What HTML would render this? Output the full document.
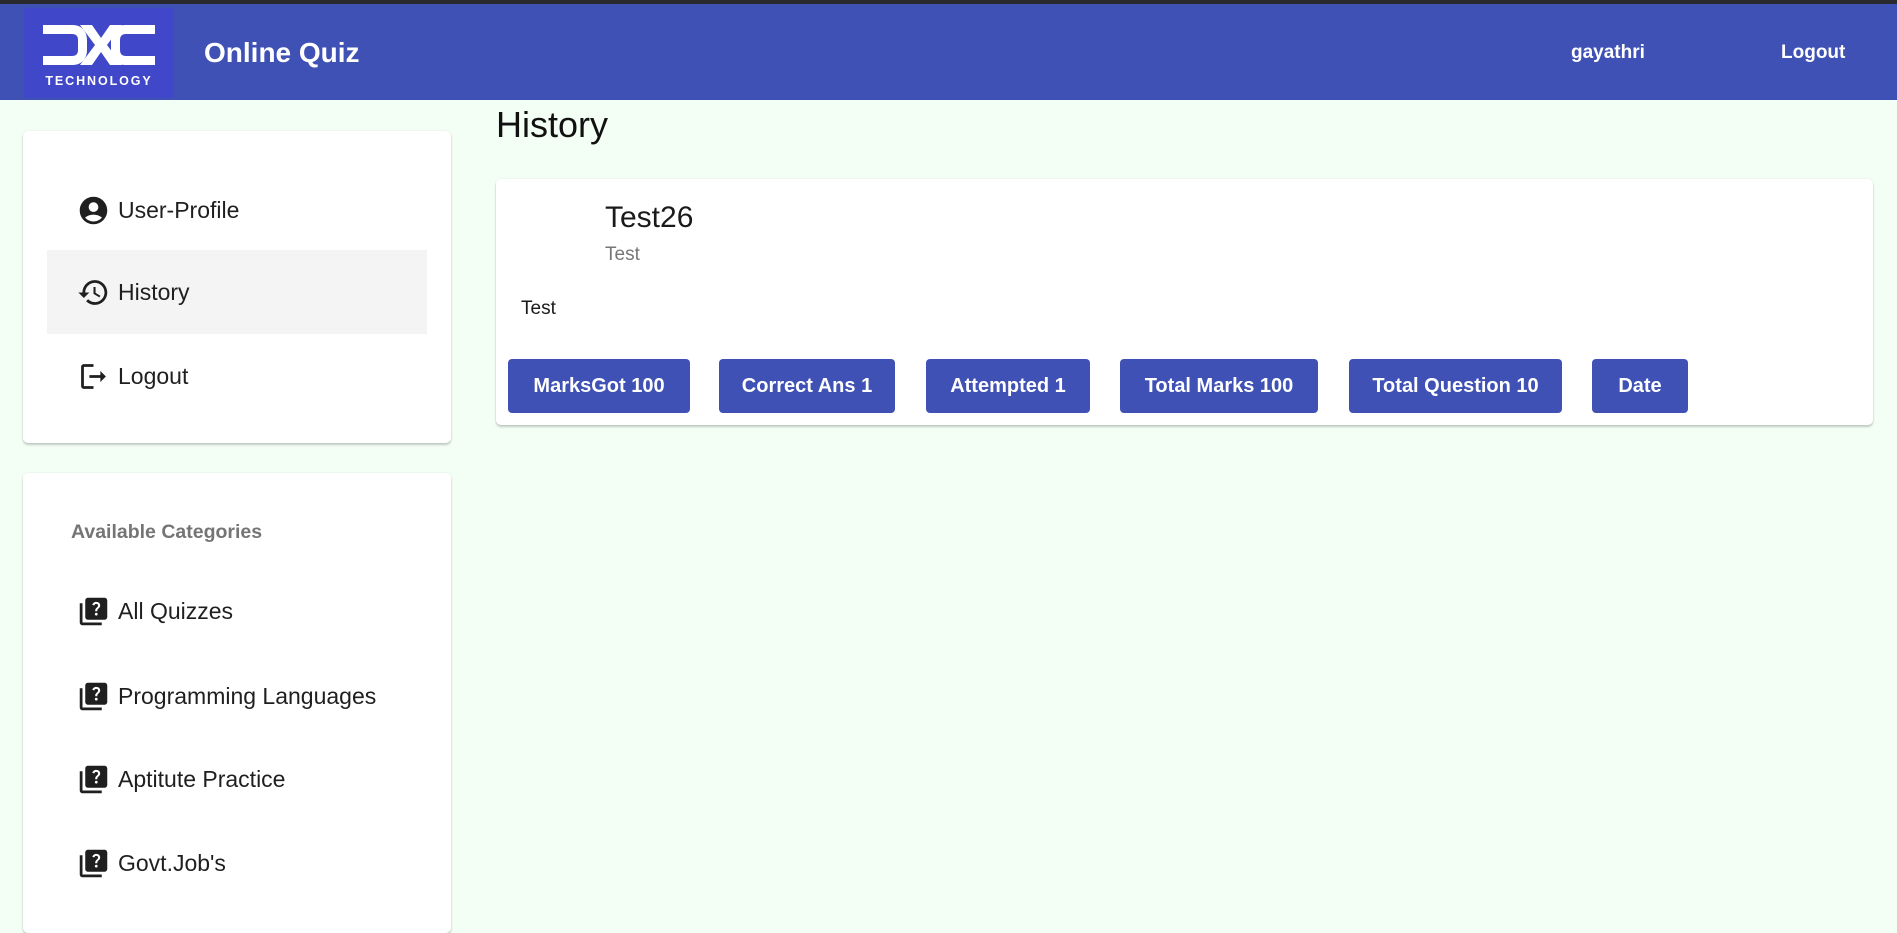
<!DOCTYPE html>
<html><head><meta charset="utf-8"><style>
*{box-sizing:border-box;margin:0;padding:0}
body{width:1897px;height:909px;overflow:hidden;background:#f3fff5;font-family:"Liberation Sans",Roboto,sans-serif;color:#1f1f1f;position:relative}
.topline{position:absolute;left:0;top:0;width:1897px;height:4px;background:#2a2a2e}
.hdr{position:absolute;left:0;top:4px;width:1897px;height:96px;background:#3f51b5;color:#fff}
.logo{position:absolute;left:24px;top:4px;width:150px;height:90px;background:#4047c8}
.title{position:absolute;left:204px;top:33px;font-size:28px;font-weight:bold}
.hl{position:absolute;top:38px;font-size:19px;font-weight:bold}
.card{position:absolute;background:#fff;border-radius:5px;box-shadow:0 2px 2px rgba(0,0,0,.2),0 0 2px rgba(0,0,0,.08)}
.item{position:absolute;left:24px;width:380px;height:84px;display:flex;align-items:center;font-size:23px}
.item svg{width:33px;height:33px;margin-left:30px;margin-right:8px}
.btn{position:absolute;top:359px;height:54px;background:#3f51b5;color:#fff;border-radius:4px;font-size:20px;font-weight:bold;display:flex;align-items:center;justify-content:center}
</style></head><body>
<div class="topline"></div>
<div class="hdr">
 <div class="logo">
  <svg width="150" height="90" viewBox="0 0 150 90">
   <g fill="#fff">
    <path d="M19 17h30c9 0 14 7 14 15v10c0 8-5 15-14 15H19v-9h29c4 0 6-2 6-6V32c0-4-2-6-6-6H19z"/>
    <path d="M56 17h12l9 13 9-13h12L83 37l15 20H86l-9-13-9 13H56l15-20z"/>
    <path d="M131 17h-30c-9 0-14 7-14 15v10c0 8 5 15 14 15h30v-9h-29c-4 0-6-2-6-6V32c0-4 2-6 6-6h29z"/>
   </g>
   <text x="75" y="77" text-anchor="middle" fill="#fff" font-family="Liberation Sans" font-weight="bold" font-size="12.5" letter-spacing="1.9">TECHNOLOGY</text>
  </svg>
 </div>
 <div class="title">Online Quiz</div>
 <div class="hl" style="left:1571px">gayathri</div>
 <div class="hl" style="left:1781px">Logout</div>
</div>

<div class="card" style="left:23px;top:131px;width:428px;height:312px">
 <div class="item" style="top:37px"><svg viewBox="0 0 24 24"><path fill="#1f1f1f" d="M12 2C6.48 2 2 6.480 2 12s4.48 10 10 10 10-4.48 10-10S17.52 2 12 2zm0 4c1.93 0 3.5 1.57 3.5 3.5S13.93 13 12 13s-3.5-1.57-3.5-3.5S10.07 6 12 6zm0 14c-2.03 0-4.43-.82-6.14-2.88C7.55 15.8 9.68 15 12 15s4.45.8 6.14 2.12C16.43 19.18 14.03 20 12 20z"/></svg>User-Profile</div>
 <div class="item" style="top:119px;background:#f4f4f4"><svg viewBox="0 0 24 24"><path fill="#1f1f1f" d="M13 3c-4.97 0-9 4.03-9 9H1l3.89 3.89.07.14L9 12H6c0-3.870 3.13-7 7-7s7 3.13 7 7-3.13 7-7 7c-1.93 0-3.68-.79-4.94-2.06l-1.42 1.42C8.27 19.99 10.51 21 13 21c4.97 0 9-4.03 9-9s-4.03-9-9-9zm-1 5v5l4.28 2.54.72-1.21-3.5-2.08V8H12z"/></svg>History</div>
 <div class="item" style="top:203px"><svg viewBox="0 0 24 24"><path fill="#1f1f1f" d="M5 5h7V3H5c-1.1 0-2 .9-2 2v14c0 1.1.9 2 2 2h7v-2H5V5zm16 7-4-4v3H9v2h8v3l4-4z"/></svg>Logout</div>
</div>

<div class="card" style="left:23px;top:473px;width:428px;height:460px">
 <div style="position:absolute;left:48px;top:48px;font-size:19.5px;font-weight:bold;color:#757575">Available Categories</div>
 <div class="item" style="top:96px"><svg viewBox="0 0 24 24"><path fill="#1f1f1f" d="M4 6H2v14c0 1.1.9 2 2 2h14v-2H4V6zm16-4H8c-1.1 0-2 .9-2 2v12c0 1.1.9 2 2 2h12c1.1 0 2-.9 2-2V4c0-1.1-.9-2-2-2zm-5.99 13c-.59 0-1.05-.47-1.05-1.05 0-.59.47-1.04 1.05-1.04.59 0 1.04.45 1.04 1.04-.01.58-.45 1.05-1.04 1.05zm2.5-6.17c-.63.93-1.23 1.21-1.56 1.81-.13.24-.18.4-.18 1.18h-1.52c0-.41-.06-1.08.26-1.65.41-.73 1.18-1.16 1.63-1.8.48-.68.21-1.94-1.14-1.94-.88 0-1.32.67-1.5 1.23l-1.37-.57C11.51 5.96 12.52 5 13.99 5c1.23 0 2.08.56 2.51 1.26.37.61.59 1.73.01 2.57z"/></svg>All Quizzes</div>
 <div class="item" style="top:181px"><svg viewBox="0 0 24 24"><path fill="#1f1f1f" d="M4 6H2v14c0 1.1.9 2 2 2h14v-2H4V6zm16-4H8c-1.1 0-2 .9-2 2v12c0 1.1.9 2 2 2h12c1.1 0 2-.9 2-2V4c0-1.1-.9-2-2-2zm-5.990 13c-.59 0-1.05-.47-1.05-1.05 0-.59.47-1.04 1.05-1.04.59 0 1.04.45 1.04 1.04-.01.58-.45 1.05-1.04 1.05zm2.5-6.17c-.63.93-1.23 1.21-1.56 1.81-.13.24-.18.4-.18 1.18h-1.52c0-.41-.06-1.08.26-1.65.41-.73 1.18-1.16 1.63-1.8.48-.68.21-1.94-1.14-1.94-.88 0-1.32.67-1.5 1.23l-1.37-.57C11.51 5.96 12.52 5 13.99 5c1.23 0 2.08.56 2.51 1.26.37.61.59 1.73.01 2.57z"/></svg>Programming Languages</div>
 <div class="item" style="top:264px"><svg viewBox="0 0 24 24"><path fill="#1f1f1f" d="M4 6H2v14c0 1.1.9 2 2 2h14v-2H4V6zm16-4H8c-1.1 0-2 .9-2 2v12c0 1.1.9 2 2 2h12c1.1 0 2-.9 2-2V4c0-1.1-.9-2-2-2zm-5.99 13c-.59 0-1.05-.47-1.05-1.05 0-.59.47-1.04 1.05-1.04.59 0 1.04.45 1.04 1.04-.01.58-.45 1.05-1.04 1.05zm2.5-6.17c-.63.93-1.23 1.21-1.56 1.81-.13.24-.18.4-.18 1.18h-1.52c0-.41-.06-1.08.26-1.65.41-.73 1.18-1.16 1.63-1.8.48-.68.21-1.94-1.14-1.94-.88 0-1.32.67-1.5 1.23l-1.37-.57C11.51 5.96 12.52 5 13.99 5c1.23 0 2.08.56 2.51 1.26.37.61.59 1.73.01 2.57z"/></svg>Aptitute Practice</div>
 <div class="item" style="top:348px"><svg viewBox="0 0 24 24"><path fill="#1f1f1f" d="M4 6H2v14c0 1.1.9 2 2 2h14v-2H4V6zm16-4H8c-1.1 0-2 .9-2 2v12c0 1.1.9 2 2 2h12c1.1 0 2-.9 2-2V4c0-1.1-.9-2-2-2zm-5.99 13c-.59 0-1.05-.47-1.05-1.05 0-.59.47-1.04 1.05-1.04.59 0 1.04.45 1.04 1.04-.01.58-.45 1.05-1.04 1.05zm2.5-6.17c-.63.93-1.23 1.21-1.56 1.81-.13.24-.18.4-.18 1.18h-1.52c0-.41-.06-1.08.26-1.65.41-.73 1.18-1.16 1.63-1.8.48-.68.21-1.94-1.14-1.94-.88 0-1.32.67-1.5 1.23l-1.37-.57C11.51 5.96 12.52 5 13.99 5c1.23 0 2.08.56 2.51 1.26.37.61.59 1.73.01 2.57z"/></svg>Govt.Job's</div>
</div>

<div style="position:absolute;left:496px;top:104px;font-size:36px;color:#111">History</div>

<div class="card" style="left:496px;top:179px;width:1377px;height:246px"></div>
<div style="position:absolute;left:605px;top:201px;font-size:30px;color:#1a1a1a">Test26</div>
<div style="position:absolute;left:605px;top:244px;font-size:19px;color:#777">Test</div>
<div style="position:absolute;left:521px;top:298px;font-size:19px;color:#1a1a1a">Test</div>

<div class="btn" style="left:508px;width:182px">MarksGot 100</div>
<div class="btn" style="left:719px;width:176px">Correct Ans 1</div>
<div class="btn" style="left:926px;width:164px">Attempted 1</div>
<div class="btn" style="left:1120px;width:198px">Total Marks 100</div>
<div class="btn" style="left:1349px;width:213px">Total Question 10</div>
<div class="btn" style="left:1592px;width:96px">Date</div>
</body></html>
